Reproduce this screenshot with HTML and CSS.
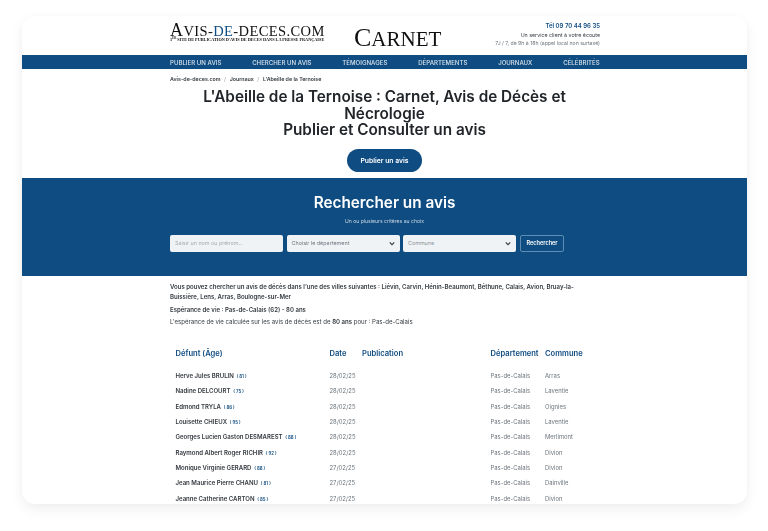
FILE: index.html
```html
<!DOCTYPE html>
<html lang="fr">
<head>
<meta charset="utf-8">
<title>L'Abeille de la Ternoise</title>
<link rel="stylesheet" href="styles.css">
</head>
<body>
<div class="card">
  <header class="top wrap">
    <div class="logo">
      <div class="logo-name"><span class="logo-cap">A</span>VIS-<span class="logo-de">DE</span>-DECES.COM</div>
      <div class="logo-sub">1<sup>er</sup> site de publication d'avis de deces dans la presse française</div>
    </div>
    <div class="carnet"><span class="carnet-cap">C</span>ARNET</div>
    <div class="contact">
      <div class="tel">Tél 09 70 44 96 35</div>
      <div class="service">Un service client à votre écoute</div>
      <div class="hours">7J / 7, de 9h à 18h (appel local non surtaxé)</div>
    </div>
  </header>
  <nav class="nav">
    <div class="wrap nav-in">
      <span>PUBLIER UN AVIS</span>
      <span>CHERCHER UN AVIS</span>
      <span>TÉMOIGNAGES</span>
      <span>DÉPARTEMENTS</span>
      <span>JOURNAUX</span>
      <span>CÉLÉBRITÉS</span>
    </div>
  </nav>
  <div class="wrap crumbs">
    <span>Avis-de-deces.com</span><i>/</i><span>Journaux</span><i>/</i><span>L'Abeille de la Ternoise</span>
  </div>
  <h1 class="title">L'Abeille de la Ternoise : Carnet, Avis de Décès et Nécrologie<br>Publier et Consulter un avis</h1>
  <div class="cta-row"><a class="cta">Publier un avis</a></div>
  <section class="search">
    <h2>Rechercher un avis</h2>
    <p>Un ou plusieurs critères au choix</p>
    <div class="wrap fields">
      <div class="field ph">Saisir un nom ou prénom...</div>
      <div class="field sel">Choisir le département<svg viewBox="0 0 8 6" class="chev"><path d="M1 1.5l3 3 3-3" fill="none" stroke="#343a40" stroke-width="1.5"/></svg></div>
      <div class="field sel ph2">Commune<svg viewBox="0 0 8 6" class="chev"><path d="M1 1.5l3 3 3-3" fill="none" stroke="#343a40" stroke-width="1.5"/></svg></div>
      <div class="go">Rechercher</div>
    </div>
  </section>
  <div class="wrap info">
    <p class="villes"><b>Vous pouvez chercher un avis de décès dans l'une des villes suivantes : Liévin, Carvin, Hénin-Beaumont, Béthune, Calais, Avion, Bruay-la-Buissière, Lens, Arras, Boulogne-sur-Mer</b></p>
    <p class="esp"><b>Espérance de vie : Pas-de-Calais (62) - 80 ans</b></p>
    <p class="calc">L'espérance de vie calculée sur les avis de décès est de <b>80 ans</b> pour : Pas-de-Calais</p>
  </div>
  <div class="wrap">
    <table class="list">
      <thead>
        <tr><th class="c1">Défunt (Âge)</th><th class="c2">Date</th><th class="c3">Publication</th><th class="c4">Département</th><th>Commune</th></tr>
      </thead>
      <tbody>
        <tr><td><b>Herve Jules BRULIN</b> <em>( 81 )</em></td><td>28/02/25</td><td></td><td>Pas-de-Calais</td><td>Arras</td></tr>
        <tr><td><b>Nadine DELCOURT</b> <em>( 75 )</em></td><td>28/02/25</td><td></td><td>Pas-de-Calais</td><td>Laventie</td></tr>
        <tr><td><b>Edmond TRYLA</b> <em>( 86 )</em></td><td>28/02/25</td><td></td><td>Pas-de-Calais</td><td>Oignies</td></tr>
        <tr><td><b>Louisette CHIEUX</b> <em>( 95 )</em></td><td>28/02/25</td><td></td><td>Pas-de-Calais</td><td>Laventie</td></tr>
        <tr><td><b>Georges Lucien Gaston DESMAREST</b> <em>( 88 )</em></td><td>28/02/25</td><td></td><td>Pas-de-Calais</td><td>Merlimont</td></tr>
        <tr><td><b>Raymond Albert Roger RICHIR</b> <em>( 92 )</em></td><td>28/02/25</td><td></td><td>Pas-de-Calais</td><td>Divion</td></tr>
        <tr><td><b>Monique Virginie GERARD</b> <em>( 88 )</em></td><td>27/02/25</td><td></td><td>Pas-de-Calais</td><td>Divion</td></tr>
        <tr><td><b>Jean Maurice Pierre CHANU</b> <em>( 81 )</em></td><td>27/02/25</td><td></td><td>Pas-de-Calais</td><td>Dainville</td></tr>
        <tr><td><b>Jeanne Catherine CARTON</b> <em>( 85 )</em></td><td>27/02/25</td><td></td><td>Pas-de-Calais</td><td>Divion</td></tr>
      </tbody>
    </table>
  </div>
</div>
</body>
</html>
```
FILE: styles.css
```css
* { box-sizing: border-box; }
html, body { margin: 0; height: 531px; overflow: hidden; background: #fff; }
body { padding: 16px 21px 27px 22px; font-family: Inter, "Liberation Sans", sans-serif; color: #212529; }
.card { height: 488px; background: #fff; border-radius: 13px; overflow: hidden; box-shadow: 0 6px 14px rgba(0, 0, 0, .06), 0 0 10px rgba(0, 0, 0, .03); filter: blur(.3px); }
.wrap { width: 430px; margin-left: 148px; }
.top { height: 39px; display: flex; align-items: flex-start; }
.logo { width: 184px; padding-top: 7px; font-family: "Liberation Serif", serif; color: #111; }
.logo-name { font-size: 14.5px; line-height: 14px; height: 14px; white-space: nowrap; letter-spacing: .4px; }
.logo-cap { font-size: 18px; line-height: 14px; }
.logo-de { color: #0f4c81; }
.logo-sub { font-size: 4.25px; line-height: 5px; font-weight: 700; text-transform: uppercase; white-space: nowrap; width: 154px; }
.logo-sub sup { font-size: 3px; line-height: 0; }
.carnet { width: 100px; padding-top: 7px; font-family: "Liberation Serif", serif; font-size: 21px; line-height: 30px; color: #111; white-space: nowrap; }
.carnet-cap { font-size: 26px; line-height: 30px; }
.contact { flex: 1; text-align: right; padding-top: 6px; color: #343a40; white-space: nowrap; }
.tel { font-size: 6px; line-height: 8px; font-weight: 600; color: #0f4c81; }
.service { font-size: 5.3px; line-height: 8px; margin-top: 1px; }
.hours { font-size: 5.15px; line-height: 8px; color: #6c757d; }
.nav { height: 14px; background: #0f4c81; }
.nav-in { display: flex; height: 14px; align-items: center; gap: 30.8px; font-size: 6.1px; color: #d9e4ee; font-weight: 500; }
.nav-in span { white-space: nowrap; }
.crumbs { height: 19px; display: flex; align-items: center; font-size: 5.3px; font-weight: 600; color: #343a40; }
.crumbs i { margin: 0 3.5px; color: #adb5bd; font-style: normal; }
.title { margin: 1px auto 0; width: 400px; text-align: center; font-size: 15.3px; line-height: 16.6px; font-weight: 600; color: #212529; }
.cta-row { display: flex; justify-content: center; padding-top: 10px; }
.cta { width: 75px; height: 23px; border-radius: 12px; background: #0f4c81; color: #fff; font-size: 6.8px; font-weight: 600; display: flex; align-items: center; justify-content: center; }
.search { margin-top: 6px; height: 98px; background: #0f4c81; padding-top: 15px; color: #fff; text-align: center; }
.search h2 { margin: 0; font-size: 15.3px; line-height: 19px; font-weight: 600; }
.search p { margin: 5px 0 0; font-size: 5.1px; line-height: 8px; color: #c9d6e3; }
.fields { display: flex; gap: 3.5px; margin-top: 10px; text-align: left; }
.field { width: 113px; height: 17px; border-radius: 2px; background: #f0f3f6; font-size: 5.4px; padding-left: 5px; display: flex; align-items: center; justify-content: space-between; padding-right: 5px; color: #6c757d; }
.ph { color: #a5abb1; }
.ph2 { color: #8b9197; }
.chev { width: 6px; height: 5px; }
.go { width: 44px; height: 17px; margin-left: .5px; border: 1px solid #5d8cb4; border-radius: 2px; color: #fff; font-size: 5.6px; font-weight: 600; display: flex; align-items: center; justify-content: center; padding-bottom: 1px; }
.info { padding-top: 6px; font-size: 6.05px; color: #343a40; }
.info p { margin: 0; }
.info b { font-weight: 600; }
.villes { line-height: 10px; width: 410px; }
.esp { line-height: 10px; margin-top: 3px !important; }
.calc { line-height: 10px; margin-top: 2px !important; }
.list { margin-top: 16px; border-collapse: collapse; table-layout: fixed; width: 430px; }
.list th { padding: 0 0 0 5.5px; text-align: left; font-size: 7.6px; line-height: 16px; font-weight: 600; color: #0f4c81; white-space: nowrap; height: 16px; }
.list th.c1 { width: 154px; }
.list th.c2 { width: 32.5px; }
.list th.c3 { width: 128.5px; }
.list th.c4 { width: 54.5px; }
.list thead tr { height: 22px; }
.list td { padding: 0 0 0 5.5px; height: 15.35px; font-size: 5.9px; color: #6c757d; white-space: nowrap; }
.list tbody tr:first-child td { padding-top: 2.6px; height: 18.3px; }
.list td b { font-size: 6.05px; font-weight: 600; color: #343a40; }
.list td em { font-style: normal; font-size: 4.4px; font-weight: 600; color: #0f4c81; margin-left: 1px; }
```
